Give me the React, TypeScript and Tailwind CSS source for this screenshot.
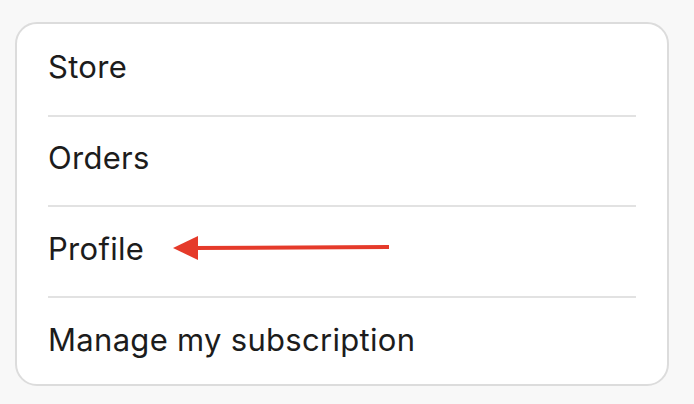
export default function App() {
  const items = [
    { t: "Store", h: "h-[93px] pb-[4px]", b: true },
    { t: "Orders", h: "h-[90px] pb-[5px]", b: true },
    { t: "Profile", h: "h-[91px] pb-[5px]", b: true },
    { t: "Manage my subscription", h: "h-[86px] pb-[1px]", b: false },
  ];
  return (
    <div className="w-[694px] h-[404px] bg-[#f8f8f8] pt-[22px] pl-[15px]" style={{ fontFamily: "Inter, 'Noto Sans', sans-serif" }}>
      <div className="w-[654px] h-[364px] bg-white border-2 border-[#dcdcdc] rounded-[22px] flex flex-col px-[31px]">
        {items.map((it) => (
          <div key={it.t} className={`${it.h} shrink-0 flex items-center text-[31px] text-[#1c1c1c] tracking-[0.3px] ${it.b ? "border-b-2 border-[#e2e2e2]" : ""}`}>
            <span>{it.t}</span>
            {it.t === "Profile" && (
              <svg width="220" height="30" viewBox="0 0 220 30" className="ml-[29px] mt-[-3px]">
                <line x1="20" y1="15" x2="216" y2="14" stroke="#e53a2a" strokeWidth="4" />
                <polygon points="0,15 25,3 25,27" fill="#e53a2a" />
              </svg>
            )}
          </div>
        ))}
      </div>
    </div>
  );
}
